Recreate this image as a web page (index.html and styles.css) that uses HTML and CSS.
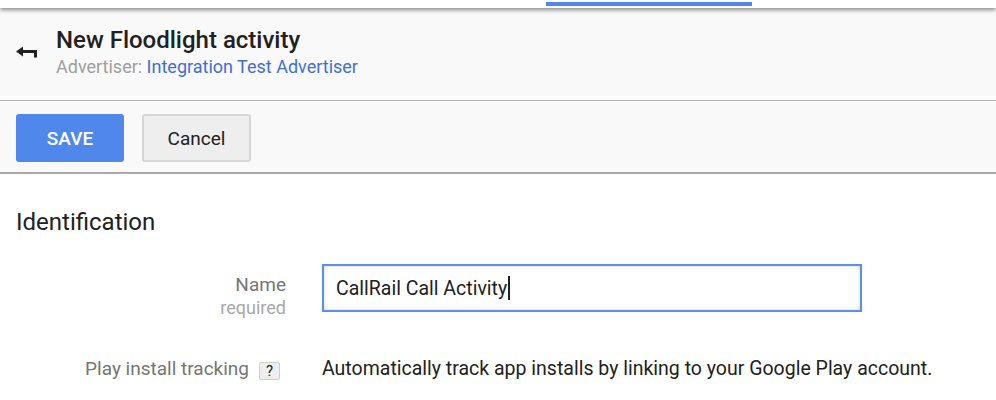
FILE: index.html
```html
<!DOCTYPE html>
<html lang="en">
<head>
    <meta charset="UTF-8">
    <meta name="viewport" content="width=device-width, initial-scale=1.0">
    <title>New Floodlight activity</title>
    <link rel="stylesheet" href="styles.css">
</head>
<body>
    <div class="topbar">
        <div class="tab-indicator"></div>
    </div>

    <header class="page-header">
        <a class="back-link" href="#" aria-label="Back">
            <svg width="22" height="12" viewBox="0 0 22 12">
                <path d="M0 5.5 L7 0.5 L7 10.5 Z M6 4 H21 V11.5 H18 V7 H6 Z" fill="#212121"/>
            </svg>
        </a>
        <div class="titles">
            <h1>New Floodlight activity</h1>
            <div class="subtitle">Advertiser: <a href="#">Integration Test Advertiser</a></div>
        </div>
    </header>

    <div class="toolbar">
        <button class="btn btn-primary">SAVE</button>
        <button class="btn btn-secondary">Cancel</button>
    </div>

    <main class="content">
        <h2>Identification</h2>

        <div class="form-row">
            <div class="form-label">
                <label for="name">Name</label>
                <span class="hint">required</span>
            </div>
            <div class="form-field">
                <div class="text-input">
                    <span>CallRail Call Activity</span><span class="caret"></span>
                </div>
            </div>
        </div>

        <div class="form-row row-play">
            <div class="form-label">
                <span>Play install tracking</span>
                <span class="help">?</span>
            </div>
            <div class="form-field">
                Automatically track app installs by linking to your Google Play account.
            </div>
        </div>
    </main>
</body>
</html>
```

FILE: styles.css
```css
body {
    font-family: Roboto, "Liberation Sans", Arial, sans-serif;
    background-color: white;
    color: #212121;
    margin: 0;
    padding: 0;
}

.topbar {
    position: relative;
    z-index: 1;
    height: 8px;
    background-color: white;
    box-shadow: 0 2px 4px rgba(0,0,0,0.45);
}

.tab-indicator {
    margin-left: 546px;
    padding-top: 2px;
    width: 206px;
    height: 6px;
    box-sizing: border-box;
    background-color: #4f87ea;
    background-clip: content-box;
}

.page-header {
    display: flex;
    align-items: flex-start;
    height: 88px;
    box-sizing: border-box;
    padding: 18px 16px 0 16px;
    background-color: #f9f9f9;
}

.back-link {
    display: block;
    margin-top: 20px;
    margin-right: 18px;
    line-height: 0;
}

.titles h1 {
    margin: 0;
    font-size: 24px;
    line-height: 28px;
    font-weight: 500;
    color: #212121;
}

.subtitle {
    margin-top: 2px;
    font-size: 18px;
    line-height: 22px;
    color: #9e9e9e;
}

.subtitle a {
    color: #3f6fd6;
    text-decoration: none;
}

.toolbar {
    display: flex;
    gap: 18px;
    margin-top: 4px;
    padding: 13px 16px 10px 16px;
    background-color: #f9f9f9;
    border-top: 1px solid #b4b4b4;
    border-bottom: 2px solid #a8a8a8;
}

.btn {
    height: 48px;
    border-radius: 3px;
    font-family: inherit;
    font-size: 19px;
    cursor: pointer;
}

.btn-primary {
    width: 108px;
    border: none;
    background-color: #4f87ea;
    color: white;
    font-weight: 500;
}

.btn-secondary {
    width: 109px;
    border: 2px solid #d6d6d6;
    background-color: #eeeeee;
    color: #212121;
}

.content {
    padding: 0 16px;
}

.content h2 {
    margin: 34px 0 0 0;
    font-size: 24px;
    line-height: 28px;
    font-weight: 400;
    color: #212121;
}

.form-row {
    display: grid;
    grid-template-columns: 270px 1fr;
    column-gap: 36px;
    margin-top: 28px;
}

.form-label {
    display: flex;
    flex-direction: column;
    align-items: flex-end;
    padding-top: 10px;
    font-size: 19px;
    line-height: 22px;
    color: #757575;
}

.form-label .hint {
    margin-top: 2px;
    font-size: 18px;
    line-height: 20px;
    color: #a8a8a8;
}

.text-input {
    display: flex;
    align-items: center;
    width: 540px;
    height: 48px;
    box-sizing: border-box;
    padding: 0 12px;
    border: 2px solid #5b8eee;
    box-shadow: inset 0 0 4px rgba(0,0,0,0.15);
    font-size: 19.5px;
    color: #212121;
}

.caret {
    width: 2px;
    height: 24px;
    margin-left: 1px;
    background-color: #212121;
}

.row-play {
    margin-top: 40px;
}

.row-play .form-label {
    flex-direction: row;
    justify-content: flex-end;
    align-items: center;
    gap: 10px;
    padding-top: 0;
    padding-right: 6px;
}

.help {
    width: 21px;
    height: 18px;
    margin-top: 4px;
    box-sizing: border-box;
    border: 1px solid #cfcfcf;
    border-radius: 2px;
    background-color: #eeeeee;
    color: #212121;
    font-size: 15px;
    line-height: 16px;
    text-align: center;
}

.row-play .form-field {
    font-size: 19.5px;
    line-height: 22px;
    color: #212121;
    white-space: nowrap;
}
```
